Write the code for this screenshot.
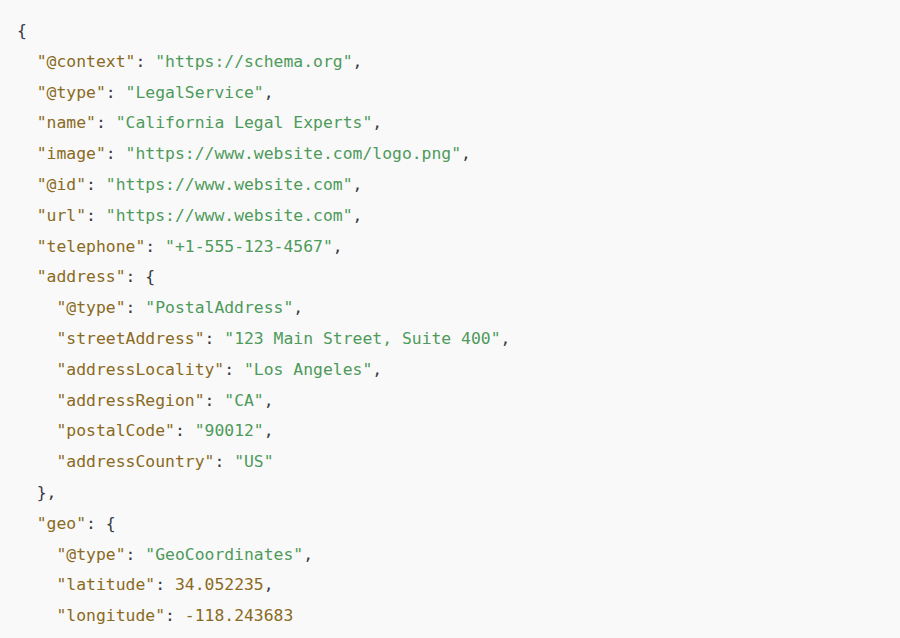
import React from "react";

const K = ({ children }) => <span className="text-[#8a6a22]">{children}</span>;
const S = ({ children }) => <span className="text-[#4e9a5b]">{children}</span>;

// each line: indent level + parts
const lines = [
  [0, ["{"]],
  [1, [["k", '"@context"'], ": ", ["s", '"https://schema.org"'], ","]],
  [1, [["k", '"@type"'], ": ", ["s", '"LegalService"'], ","]],
  [1, [["k", '"name"'], ": ", ["s", '"California Legal Experts"'], ","]],
  [1, [["k", '"image"'], ": ", ["s", '"https://www.website.com/logo.png"'], ","]],
  [1, [["k", '"@id"'], ": ", ["s", '"https://www.website.com"'], ","]],
  [1, [["k", '"url"'], ": ", ["s", '"https://www.website.com"'], ","]],
  [1, [["k", '"telephone"'], ": ", ["s", '"+1-555-123-4567"'], ","]],
  [1, [["k", '"address"'], ": {"]],
  [2, [["k", '"@type"'], ": ", ["s", '"PostalAddress"'], ","]],
  [2, [["k", '"streetAddress"'], ": ", ["s", '"123 Main Street, Suite 400"'], ","]],
  [2, [["k", '"addressLocality"'], ": ", ["s", '"Los Angeles"'], ","]],
  [2, [["k", '"addressRegion"'], ": ", ["s", '"CA"'], ","]],
  [2, [["k", '"postalCode"'], ": ", ["s", '"90012"'], ","]],
  [2, [["k", '"addressCountry"'], ": ", ["s", '"US"']]],
  [1, ["},"]],
  [1, [["k", '"geo"'], ": {"]],
  [2, [["k", '"@type"'], ": ", ["s", '"GeoCoordinates"'], ","]],
  [2, [["k", '"latitude"'], ": ", ["k", "34.052235"], ","]],
  [2, [["k", '"longitude"'], ": ", ["k", "-118.243683"]]],
];

const App = () => {
  return (
    <div className="min-h-screen w-full bg-[#f9f9f9] overflow-hidden">
      <pre className="pl-[17px] pt-[16px] font-['DejaVu_Sans_Mono',monospace] text-[16.4px] leading-[30.8px] text-[#383a42]">
        {lines.map(([indent, parts], i) => (
          <div key={i}>
            {"  ".repeat(indent)}
            {parts.map((p, j) =>
              typeof p === "string" ? (
                <span key={j}>{p}</span>
              ) : p[0] === "k" ? (
                <K key={j}>{p[1]}</K>
              ) : (
                <S key={j}>{p[1]}</S>
              )
            )}
          </div>
        ))}
      </pre>
    </div>
  );
};

export default App;
